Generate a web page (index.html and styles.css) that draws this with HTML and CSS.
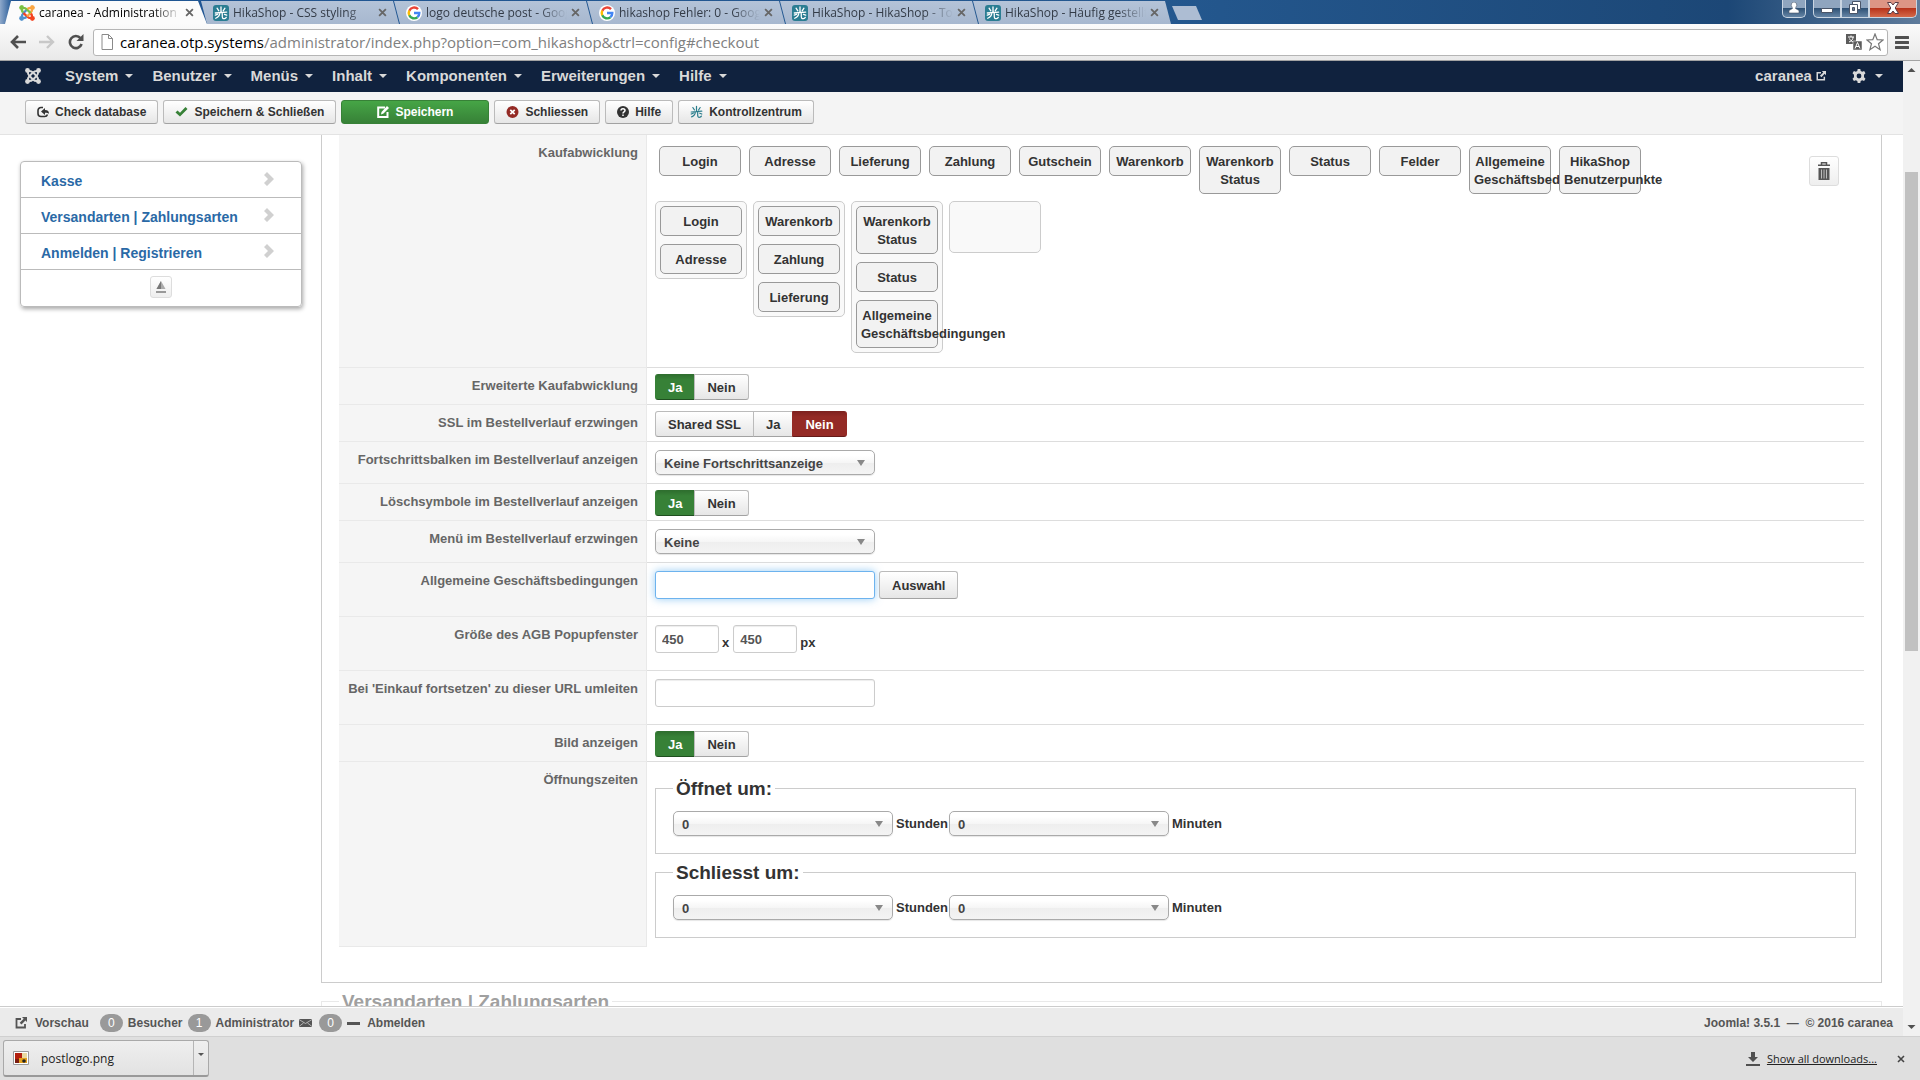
FILE: index.html
```html
<!DOCTYPE html>
<html lang="de">

<head>
    <meta charset="UTF-8">
    <meta name="viewport" content="width=device-width, initial-scale=1.0">
    <title>caranea - Administration</title>
    <link rel="stylesheet" href="styles.css">
</head>

<body>
    <!-- shared icons -->
    <svg class="sprite" width="0" height="0">
        <symbol id="hika" viewBox="0 0 16 16">
            <g fill="none" stroke="currentColor" stroke-width="1.500" stroke-linecap="round">
                <path d="M8 1v6M3.500 2.500l2 3M12.500 2.500l-2 3M1.500 8l13-1M6.500 8c0 3-2 5-4.500 6M9.500 8c0 2-.5 5 .5 6s3 .5 4-1M4 9.500l-2.500 1M12 9.500l2.500 1" />
            </g>
        </symbol>
        <symbol id="google" viewBox="0 0 16 16">
            <circle cx="8" cy="8" r="8" fill="#fff" />
            <g fill="none" stroke-width="2.400">
                <path d="M12 4.200A5.300 5.300 0 0 0 3.300 5.800" stroke="#ea4335" />
                <path d="M3.300 5.600a5.300 5.300 0 0 0 0 4.800" stroke="#fbbc05" />
                <path d="M3.300 10.200a5.300 5.300 0 0 0 8.200 2" stroke="#34a853" />
                <path d="M11.400 12.200A5.300 5.300 0 0 0 13.300 8H8" stroke="#4285f4" />
            </g>
        </symbol>
        <symbol id="joomla" viewBox="0 0 16 16">
            <g fill="none" stroke="currentColor" stroke-width="2">
                <path d="M3 3Q2.500 6 4.500 8L8 11.500Q10 13.500 13 13" />
                <path d="M13 3Q10 2.500 8 4.500L4.500 8Q2.500 10 3 13" />
                <path d="M13 13Q13.500 10 11.500 8L8 4.500Q6 2.500 3 3" />
                <path d="M3 13Q6 13.500 8 11.500L11.500 8Q13.500 6 13 3" />
            </g>
            <g fill="currentColor">
                <circle cx="2.500" cy="2.500" r="2.400" /><circle cx="13.500" cy="2.500" r="2.400" />
                <circle cx="2.500" cy="13.500" r="2.400" /><circle cx="13.500" cy="13.500" r="2.400" />
            </g>
        </symbol>
        <symbol id="close" viewBox="0 0 8 8">
            <path d="M1 1l6 6M7 1L1 7" stroke="currentColor" stroke-width="1.600" />
        </symbol>
        <symbol id="out" viewBox="0 0 12 12">
            <path d="M6 2H1.500v8.500H10V7" fill="none" stroke="currentColor" stroke-width="1.800" />
            <path d="M7 0h5v5l-1.600-1.600L6.500 7.500 4.700 5.700l4-4z" fill="currentColor" />
        </symbol>
        <symbol id="chevron" viewBox="0 0 10 14">
            <path d="M3 0l7 7-7 7-3-3 4-4-4-4z" fill="currentColor" />
        </symbol>
    </svg>

    <header class="tabstrip">
        <div class="tab active">
            <svg class="favicon" viewBox="0 0 16 16">
                <g fill="none" stroke-width="2.400">
                    <path d="M3 13Q2.500 10 4.500 8L8 4.500" stroke="#5091cd" />
                    <path d="M13 13Q10 13.500 8 11.500L4.500 8" stroke="#f44321" />
                    <path d="M13 3Q13.500 6 11.500 8L8 11.500" stroke="#f9a541" />
                    <path d="M3 3Q6 2.500 8 4.500L11.500 8" stroke="#7ac143" />
                    <path d="M3 3Q2.500 5.500 4 7.500" stroke="#7ac143" />
                    <path d="M13 3Q10.500 2.500 8.500 4" stroke="#f9a541" />
                    <path d="M13 13Q13.500 10.500 12 8.500" stroke="#f44321" />
                    <path d="M3 13Q5.500 13.500 7.500 12" stroke="#5091cd" />
                </g>
                <circle cx="2.500" cy="2.500" r="2.400" fill="#7ac143" /><circle cx="13.500" cy="2.500" r="2.400" fill="#f9a541" />
                <circle cx="2.500" cy="13.500" r="2.400" fill="#5091cd" /><circle cx="13.500" cy="13.500" r="2.400" fill="#f44321" />
            </svg>
            <span class="tab-title">caranea - Administration -</span>
            <svg class="tab-close"><use href="#close" /></svg>
        </div>
        <div class="tab">
            <svg class="favicon hika-icon"><use href="#hika" /></svg>
            <span class="tab-title">HikaShop - CSS styling</span>
            <svg class="tab-close"><use href="#close" /></svg>
        </div>
        <div class="tab">
            <svg class="favicon"><use href="#google" /></svg>
            <span class="tab-title">logo deutsche post - Goog</span>
            <svg class="tab-close"><use href="#close" /></svg>
        </div>
        <div class="tab">
            <svg class="favicon"><use href="#google" /></svg>
            <span class="tab-title">hikashop Fehler: 0 - Googl</span>
            <svg class="tab-close"><use href="#close" /></svg>
        </div>
        <div class="tab">
            <svg class="favicon hika-icon"><use href="#hika" /></svg>
            <span class="tab-title">HikaShop - HikaShop - To</span>
            <svg class="tab-close"><use href="#close" /></svg>
        </div>
        <div class="tab">
            <svg class="favicon hika-icon"><use href="#hika" /></svg>
            <span class="tab-title">HikaShop - Häufig gestellt</span>
            <svg class="tab-close"><use href="#close" /></svg>
        </div>
        <button class="new-tab" aria-label="New tab"></button>
        <div class="window-buttons">
            <button class="win user" aria-label="User">
                <svg width="12" height="12" viewBox="0 0 12 12"><path d="M6 0a3 3 0 0 1 2 5l-.5 1.500L11 8.500V11H1V8.500l3.500-2L4 5a3 3 0 0 1 2-5z" fill="#fff" stroke="#4a5568" stroke-width=".6" /></svg>
            </button>
            <button class="win min" aria-label="Minimize">
                <svg width="14" height="12" viewBox="0 0 14 12"><path d="M1.500 6.500h11v4h-11z" fill="#fff" stroke="#4a5568" /></svg>
            </button>
            <button class="win max" aria-label="Restore">
                <svg width="14" height="13" viewBox="0 0 14 13"><path d="M4.500.5h8v8h-8z" fill="#fff" stroke="#4a5568" /><path d="M1.500 3.500h8v9h-8z" fill="#fff" stroke="#4a5568" /><path d="M4.500 6.500h2v3h-2z" fill="#6d7f94" stroke="#4a5568" /></svg>
            </button>
            <button class="win quit" aria-label="Close">
                <svg width="14" height="12" viewBox="0 0 14 12"><path d="M1.500.5h3.500l2 2.500 2-2.500h3.500L9.200 6l3.300 5.500H9L7 9l-2 2.500H1.500L4.800 6z" fill="#fff" stroke="#5a3c46" /></svg>
            </button>
        </div>
    </header>

    <div class="addressbar">
        <button class="nav-btn" aria-label="Back"><svg width="16" height="14" viewBox="0 0 16 14"><path d="M8 1L2 7l6 6M2.500 7H16" fill="none" stroke="#505050" stroke-width="2.600" /></svg></button>
        <button class="nav-btn" aria-label="Forward"><svg width="16" height="14" viewBox="0 0 16 14"><path d="M8 1l6 6-6 6M13.500 7H0" fill="none" stroke="#c8c8c8" stroke-width="2.400" /></svg></button>
        <button class="nav-btn" aria-label="Reload"><svg width="16" height="16" viewBox="0 0 16 16"><path d="M12.500 4.200A6 6 0 1 0 13.600 10" fill="none" stroke="#505050" stroke-width="2.600" /><path d="M15.500 0v7h-7z" fill="#505050" /></svg></button>
        <div class="omnibox">
            <svg width="12" height="16" viewBox="0 0 12 16"><path d="M1 .5h6.500l4 4v11H1z" fill="#fff" stroke="#8a8a8a" /><path d="M7.500.5v4h4" fill="none" stroke="#8a8a8a" /></svg>
            <div class="url"><b>caranea.otp.systems</b>/administrator/index.php?option=com_hikashop&amp;ctrl=config#checkout</div>
            <svg width="16" height="16" viewBox="0 0 16 16"><path d="M0 0h10v10H0z" fill="#5c5c5c" /><path d="M2 3h6M5 1.500V3M3 8c3-1 4-3 4-5M3.500 4.500C4 6 5.500 7.500 7.500 8" fill="none" stroke="#fff" /><path d="M7 7h9v9H7z" fill="#5c5c5c" stroke="#fff" stroke-width=".5" /><path d="M9 14.500l2.500-6 2.500 6M10 12.500h3" fill="none" stroke="#fff" /></svg>
            <svg width="18" height="18" viewBox="0 0 18 18"><path d="M9 1l2.200 5.600 5.800.4-4.500 3.700 1.600 6L9 13.300l-5.100 3.400 1.600-6L1 7l5.800-.4z" fill="#fff" stroke="#777" stroke-width="1.200" /></svg>
        </div>
        <button class="nav-btn" aria-label="Menu"><svg width="14" height="13" viewBox="0 0 14 13"><path d="M1 1.500h12M1 6.500h12M1 11.500h12" stroke="#505050" stroke-width="3" stroke-linecap="round" /></svg></button>
    </div>

    <div class="viewport">
        <div class="page">
            <nav class="navbar">
                <a class="brand" href="#" aria-label="Joomla"><svg width="16" height="16"><use href="#joomla" /></svg></a>
                <a class="menu-item" href="#">System</a>
                <a class="menu-item" href="#">Benutzer</a>
                <a class="menu-item" href="#">Menüs</a>
                <a class="menu-item" href="#">Inhalt</a>
                <a class="menu-item" href="#">Komponenten</a>
                <a class="menu-item" href="#">Erweiterungen</a>
                <a class="menu-item" href="#">Hilfe</a>
                <a class="site-link" href="#">caranea <svg width="10" height="10"><use href="#out" /></svg></a>
                <a class="menu-item settings" href="#" aria-label="Settings"><svg width="14" height="14" viewBox="0 0 14 14"><path fill-rule="evenodd" d="M5.700 0h2.600l.4 2 1.500.8 1.900-.8 1.400 2.300L12 5.800v2.400l1.500 1.500-1.400 2.300-1.900-.8-1.500.8-.4 2H5.700l-.4-2-1.500-.8-1.900.8L.5 9.700 2 8.200V5.800L.5 4.300 1.900 2l1.900.8L5.300 2zM7 4.600a2.400 2.400 0 1 0 0 4.800 2.400 2.400 0 0 0 0-4.800z" fill="currentColor" /></svg></a>
            </nav>

            <div class="toolbar">
                <button class="btn btn-small">
                    <svg width="12" height="12" viewBox="0 0 12 12"><path d="M6 1.500H4a3 3 0 0 0-3 3v3a3 3 0 0 0 3 3h3.500a3 3 0 0 0 3-2" fill="none" stroke="#333" stroke-width="1.600" /><path d="M4 5.500L8 2v2c3 0 4 1.500 4 4-1-1-2-1.200-4-1.200V9z" fill="#333" /></svg>Check database</button>
                <button class="btn btn-small">
                    <svg width="13" height="12" viewBox="0 0 12 12"><path d="M0 6.500l2-2 2.500 2.300L10 1l2 2-7.500 7.500z" fill="#378137" /></svg>Speichern &amp; Schließen</button>
                <button class="btn btn-small btn-save">
                    <svg width="12" height="12" viewBox="0 0 12 12"><path d="M8 1.500H1.200v9.500h9.300V6" fill="none" stroke="#fff" stroke-width="2" /><path d="M10 0l2 2-5.500 5.500L4 8.500 4.500 6z" fill="#fff" /></svg>Speichern</button>
                <button class="btn btn-small">
                    <svg width="13" height="12" viewBox="0 0 12 12"><circle cx="6" cy="6" r="6" fill="#942a25" /><path d="M3.800 3.800l4.400 4.400M8.200 3.800L3.800 8.200" stroke="#fff" stroke-width="1.700" /></svg>Schliessen</button>
                <button class="btn btn-small">
                    <svg width="12" height="12" viewBox="0 0 12 12"><circle cx="6" cy="6" r="6" fill="#333" /><path d="M4 4.500C4 2 8 2 8 4.500 8 6 6 5.800 6 7.500M6 8.500V10" fill="none" stroke="#fff" stroke-width="1.500" /></svg>Hilfe</button>
                <button class="btn btn-small">
                    <svg class="teal" width="13" height="14"><use href="#hika" /></svg>Kontrollzentrum</button>
            </div>

            <div class="content">
                <aside class="sidebar">
                    <ul class="sidemenu">
                        <li><a href="#">Kasse</a><svg width="10" height="14"><use href="#chevron" /></svg></li>
                        <li><a href="#">Versandarten | Zahlungsarten</a><svg width="10" height="14"><use href="#chevron" /></svg></li>
                        <li><a href="#">Anmelden | Registrieren</a><svg width="10" height="14"><use href="#chevron" /></svg></li>
                        <li class="to-top"><button class="icon-btn" aria-label="Nach oben"><svg width="10" height="12" viewBox="0 0 10 12"><path d="M5 0l4.500 8h-9z" fill="#aaa" /><path d="M5 0v8H.5z" fill="#777" /><path d="M0 10h10v2H0z" fill="#999" /></svg></button></li>
                    </ul>
                </aside>

                <main class="main">
                    <section class="panel">
                        <div class="row">
                            <div class="key">Kaufabwicklung</div>
                            <div class="value workflow">
                                <div class="step-source">
                                    <div class="step">Login</div>
                                    <div class="step">Adresse</div>
                                    <div class="step">Lieferung</div>
                                    <div class="step">Zahlung</div>
                                    <div class="step">Gutschein</div>
                                    <div class="step">Warenkorb</div>
                                    <div class="step">Warenkorb Status</div>
                                    <div class="step">Status</div>
                                    <div class="step">Felder</div>
                                    <div class="step">Allgemeine Geschäftsbedingungen</div>
                                    <div class="step">HikaShop Benutzerpunkte</div>
                                    <button class="icon-btn trash" aria-label="Papierkorb"><svg width="12" height="18" viewBox="0 0 12 18"><path d="M3.500 3V.8h5V3" fill="none" stroke="#555" stroke-width="1.500" /><path d="M0 2.500h12V4H0zM.5 6h11v12H.5z" fill="#555" /><path d="M3.500 7.500v9M6 7.500v9M8.500 7.500v9" stroke="#bbb" /></svg></button>
                                </div>
                                <div class="step-target">
                                    <div class="step-list">
                                        <div class="step">Login</div>
                                        <div class="step">Adresse</div>
                                    </div>
                                    <div class="step-list">
                                        <div class="step">Warenkorb</div>
                                        <div class="step">Zahlung</div>
                                        <div class="step">Lieferung</div>
                                    </div>
                                    <div class="step-list">
                                        <div class="step">Warenkorb Status</div>
                                        <div class="step">Status</div>
                                        <div class="step">Allgemeine Geschäftsbedingungen</div>
                                    </div>
                                    <div class="step-list"></div>
                                </div>
                            </div>
                        </div>
                        <div class="row">
                            <div class="key">Erweiterte Kaufabwicklung</div>
                            <div class="value toggle">
                                <input type="radio" name="workflow" id="workflow1" checked><label class="btn yes" for="workflow1">Ja</label>
                                <input type="radio" name="workflow" id="workflow0"><label class="btn no" for="workflow0">Nein</label>
                            </div>
                        </div>
                        <div class="row">
                            <div class="key">SSL im Bestellverlauf erzwingen</div>
                            <div class="value toggle">
                                <input type="radio" name="ssl" id="ssl2"><label class="btn yes" for="ssl2">Shared SSL</label>
                                <input type="radio" name="ssl" id="ssl1"><label class="btn yes" for="ssl1">Ja</label>
                                <input type="radio" name="ssl" id="ssl0" checked><label class="btn no" for="ssl0">Nein</label>
                            </div>
                        </div>
                        <div class="row">
                            <label class="key" for="bar">Fortschrittsbalken im Bestellverlauf anzeigen</label>
                            <div class="value">
                                <div class="chosen"><select id="bar"><option>Keine Fortschrittsanzeige</option></select></div>
                            </div>
                        </div>
                        <div class="row">
                            <div class="key">Löschsymbole im Bestellverlauf anzeigen</div>
                            <div class="value toggle">
                                <input type="radio" name="del" id="del1" checked><label class="btn yes" for="del1">Ja</label>
                                <input type="radio" name="del" id="del0"><label class="btn no" for="del0">Nein</label>
                            </div>
                        </div>
                        <div class="row">
                            <label class="key" for="itemid">Menü im Bestellverlauf erzwingen</label>
                            <div class="value">
                                <div class="chosen"><select id="itemid"><option>Keine</option></select></div>
                            </div>
                        </div>
                        <div class="row">
                            <label class="key" for="terms">Allgemeine Geschäftsbedingungen</label>
                            <div class="value">
                                <input class="text focused" type="text" id="terms">
                                <button class="btn choose">Auswahl</button>
                            </div>
                        </div>
                        <div class="row">
                            <label class="key" for="popupx">Größe des AGB Popupfenster</label>
                            <div class="value">
                                <input class="text short" type="text" id="popupx" value="450">
                                <span class="unit">x</span>
                                <input class="text short" type="text" aria-label="Höhe" value="450">
                                <span class="unit">px</span>
                            </div>
                        </div>
                        <div class="row">
                            <label class="key" for="continue">Bei 'Einkauf fortsetzen' zu dieser URL umleiten</label>
                            <div class="value">
                                <input class="text" type="text" id="continue">
                            </div>
                        </div>
                        <div class="row">
                            <div class="key">Bild anzeigen</div>
                            <div class="value toggle">
                                <input type="radio" name="img" id="img1" checked><label class="btn yes" for="img1">Ja</label>
                                <input type="radio" name="img" id="img0"><label class="btn no" for="img0">Nein</label>
                            </div>
                        </div>
                        <div class="row">
                            <div class="key">Öffnungszeiten</div>
                            <div class="value hours">
                                <fieldset>
                                    <legend>Öffnet um:</legend>
                                    <div class="time">
                                        <div class="chosen"><select id="oh"><option>0</option></select></div><label for="oh">Stunden</label>
                                        <div class="chosen"><select id="om"><option>0</option></select></div><label for="om">Minuten</label>
                                    </div>
                                </fieldset>
                                <fieldset>
                                    <legend>Schliesst um:</legend>
                                    <div class="time">
                                        <div class="chosen"><select id="ch"><option>0</option></select></div><label for="ch">Stunden</label>
                                        <div class="chosen"><select id="cm"><option>0</option></select></div><label for="cm">Minuten</label>
                                    </div>
                                </fieldset>
                            </div>
                        </div>
                    </section>
                    <fieldset class="next">
                        <legend>Versandarten | Zahlungsarten</legend>
                    </fieldset>
                </main>
            </div>

            <footer class="status">
                <a class="preview" href="#"><svg width="12" height="12"><use href="#out" /></svg>Vorschau</a>
                <span class="badge">0</span><span>Besucher</span>
                <span class="badge">1</span><span>Administrator</span>
                <svg class="mail" width="13" height="8" viewBox="0 0 13 8"><path d="M0 0h13v8H0z" fill="#555" /><path d="M0 .5l6.500 4 6.500-4M0 7.500L4.500 4M13 7.500L8.500 4" fill="none" stroke="#ccc" stroke-width=".8" /></svg>
                <span class="badge">0</span>
                <svg width="13" height="3"><path d="M0 0h13v3H0z" fill="#555" /></svg>
                <a class="logout" href="#">Abmelden</a>
                <span class="version">Joomla! 3.5.1 &nbsp;—&nbsp; © 2016 caranea</span>
            </footer>
        </div>

        <div class="scrollbar">
            <svg width="17" height="17" viewBox="0 0 17 17"><path d="M4.500 11h8l-4-4z" fill="#505050" /></svg>
            <div class="track">
                <div class="thumb"></div>
            </div>
            <svg width="17" height="17" viewBox="0 0 17 17"><path d="M4.500 6h8l-4 4z" fill="#505050" /></svg>
        </div>
    </div>

    <div class="downloads">
        <div class="file">
            <button class="file-open"><svg width="16" height="14" viewBox="0 0 16 14"><path d="M.5.5h15v13H.5z" fill="#fff" stroke="#999" /><path d="M2 2h7v6H2z" fill="#b3200f" /><path d="M9 2h5v5H9z" fill="#e9d9a0" /><path d="M6 7h8v5H6z" fill="#e5a11c" /><path d="M2 8h4v4H2z" fill="#7a1d12" /><circle cx="11" cy="10" r="1.800" fill="#222" /></svg>postlogo.png</button>
            <button class="file-menu" aria-label="Optionen"><span class="caret"></span></button>
        </div>
        <a class="all-downloads" href="#"><svg width="14" height="14" viewBox="0 0 14 14"><path d="M5 0h4v5h3L7 10 2 5h3zM0 12h14v2H0z" fill="#505050" /></svg><span>Show all downloads...</span></a>
        <button class="nav-btn close-bar" aria-label="Schließen"><svg width="8" height="8"><use href="#close" /></svg></button>
    </div>
</body>

</html>
```

FILE: styles.css
```css
* {
    box-sizing: border-box;
}

body {
    display: flex;
    flex-direction: column;
    height: 100vh;
    margin: 0;
    overflow: hidden;
    font-family: "Liberation Sans", Arial, sans-serif;
    font-size: 13px;
    font-weight: bold;
    line-height: 18px;
    color: #333;
    background-color: #fff;
}

a {
    color: inherit;
    text-decoration: none;
}

button, input, select {
    margin: 0;
    font: inherit;
    color: inherit;
}

svg {
    flex: none;
}

.sprite {
    position: absolute;
}

/* browser tabs */
.tabstrip {
    display: flex;
    height: 24px;
    padding: 1px 3px 0 5px;
    background: linear-gradient(90deg, #8fa9cb 0, #1f5593 12px, #24588f 60%, #1c4776 90%, #5f7c9c 100%);
    font: 12px "Open Sans", sans-serif;
}

.tab {
    display: flex;
    align-items: center;
    width: 200px;
    margin-right: -7px;
    padding: 0 13px 0 13px;
    color: #333b47;
    background: linear-gradient(#b4c3d8, #a7b8cf);
    clip-path: polygon(1px 0, 193px 0, 199px 100%, 7px 100%);
}

.tab.active {
    width: 202px;
    color: #000;
    background: #fbfbfb;
    clip-path: polygon(6px 0, 193px 0, 202px 100%, 0 100%);
    padding: 0 13px 0 14px;
}

.favicon {
    width: 16px;
    height: 16px;
    margin-right: 4px;
    border-radius: 3px;
}

.hika-icon {
    padding: 1px;
    color: #fff;
    background-color: #2a7d92;
}

.tab-title {
    flex: 1;
    overflow: hidden;
    white-space: nowrap;
    margin-right: 4px;
    -webkit-mask-image: linear-gradient(90deg, #000 80%, transparent);
    mask-image: linear-gradient(90deg, #000 80%, transparent);
}

.tab-close {
    width: 9px;
    height: 9px;
    color: #666;
}

.new-tab {
    width: 30px;
    height: 14px;
    margin: 5px 0 0 7px;
    padding: 0;
    border: none;
    background-color: #adbdd3;
    clip-path: polygon(0 0, 24px 0, 30px 100%, 6px 100%);
}

.window-buttons {
    display: flex;
    height: 18px;
    margin: -1px 0 0 auto;
}

.win {
    display: flex;
    justify-content: center;
    align-items: center;
    width: 28px;
    padding: 0 0 2px;
    border: 1px solid #c9d5e2;
    border-top: none;
    background: linear-gradient(#8fa5bf 45%, #2f5276 50%, #6585a6);
}

.win.user {
    width: 24px;
    margin-right: 7px;
    border-radius: 0 0 5px 5px;
}

.win.min {
    border-radius: 0 0 0 5px;
}

.win.quit {
    width: 48px;
    border-radius: 0 0 5px 0;
    background: linear-gradient(#dd9585 45%, #b8341c 50%, #d4694a);
}

/* address bar */
.addressbar {
    display: flex;
    align-items: center;
    height: 37px;
    padding: 0 8px;
    border-bottom: 1px solid #a3a3a3;
    background: linear-gradient(#fbfbfb, #e9e9e9);
}

.nav-btn {
    display: flex;
    justify-content: center;
    width: 29px;
    padding: 0;
    border: none;
    background: none;
}

.addressbar .nav-btn:first-child {
    width: 20px;
    margin-right: 4px;
}

.addressbar .nav-btn:last-child {
    width: 24px;
    margin-right: -2px;
    margin-left: 2px;
}

.omnibox {
    flex: 1;
    display: flex;
    align-items: center;
    height: 27px;
    margin-left: 3px;
    padding: 0 3px 0 7px;
    gap: 4px;
    border: 1px solid #b5b5b5;
    border-radius: 3px;
    background-color: #fff;
}

.url {
    flex: 1;
    padding-left: 3px;
    font: 15px "Open Sans", sans-serif;
    line-height: 22px;
    color: #808080;
}

.url b {
    font-weight: normal;
    color: #000;
}

.viewport {
    flex: 1;
    display: flex;
    min-height: 0;
}

.page {
    flex: 1;
    display: flex;
    flex-direction: column;
    min-width: 0;
}

/* joomla navbar */
.navbar {
    display: flex;
    align-items: center;
    height: 31px;
    padding: 0 20px 2px 25px;
    gap: 19px;
    font-size: 15px;
    color: #d9d9d9;
    background-color: #10223e;
}

.brand {
    display: flex;
    margin-right: 5px;
}

.menu-item {
    display: flex;
    align-items: center;
    gap: 7px;
}

.menu-item::after, .caret {
    content: "";
    border: 4px solid transparent;
    border-top-color: currentColor;
    border-bottom: none;
}

.site-link {
    margin-left: auto;
}

.settings {
    margin-left: 7px;
    gap: 9px;
}

/* buttons */
.toolbar {
    display: flex;
    gap: 5px;
    height: 43px;
    padding: 8px 25px;
    border-bottom: 1px solid #e3e3e3;
    background-color: #f4f4f4;
}

.btn {
    display: flex;
    justify-content: center;
    align-items: center;
    padding: 2px 12px 0;
    border: 1px solid #bbb;
    border-bottom-color: #a2a2a2;
    border-radius: 3px;
    color: #333;
    background: linear-gradient(#fff, #e6e6e6);
}

.btn-small {
    gap: 6px;
    height: 24px;
    padding: 0 11px;
    font-size: 12px;
}

.btn-save {
    width: 148px;
    color: #fff;
    border-color: #378137;
    background: linear-gradient(#46a546, #378137);
}

.teal {
    color: #2a7d8c;
}

.icon-btn {
    display: flex;
    justify-content: center;
    align-items: center;
    width: 22px;
    height: 22px;
    padding: 0;
    border: 1px solid #ddd;
    border-radius: 3px;
    background: linear-gradient(#fff, #eee);
}

/* content */
.content {
    flex: 1;
    display: flex;
    gap: 19px;
    min-height: 0;
    padding: 0 21px 0 20px;
    overflow: hidden;
}

.sidebar {
    width: 282px;
    padding-top: 26px;
}

.sidemenu {
    margin: 0;
    padding: 0;
    list-style: none;
    border: 1px solid #bbb;
    border-radius: 4px;
    box-shadow: 1px 2px 4px rgba(0, 0, 0, .35);
}

.sidemenu li {
    display: flex;
    justify-content: space-between;
    height: 36px;
    padding: 10px 27px 0 20px;
    border-bottom: 1px solid #bbb;
    font-size: 14px;
    color: #d0d0d0;
}

.sidemenu a {
    color: #2a69a6;
}

.sidemenu .to-top {
    justify-content: center;
    padding: 6px 0 0;
    border-bottom: none;
}

.main {
    flex: 1;
    min-width: 0;
}

.panel {
    padding: 0 17px 35px;
    border: 1px solid #ccc;
    border-top: none;
}

.row {
    display: flex;
}

.key {
    width: 308px;
    padding: 9px 8px 0;
    border-right: 1px solid #e9e9e9;
    border-bottom: 1px solid #e9e9e9;
    text-align: right;
    color: #666;
    background-color: #f5f5f5;
}

.value {
    flex: 1;
    display: flex;
    align-items: flex-start;
    min-width: 0;
    padding: 8px;
    border-bottom: 1px solid #ddd;
}

.row:last-child .value {
    border-bottom: none;
    padding-bottom: 9px;
}

/* checkout steps */
.value.workflow {
    display: block;
    padding: 11px 8px 14px;
}

.step-source {
    display: flex;
    align-items: flex-start;
    gap: 8px;
    padding-left: 4px;
    margin-bottom: 7px;
}

.step {
    position: relative;
    width: 82px;
    padding: 6px 4px 4px;
    border: 1px solid #999;
    border-radius: 5px;
    text-align: center;
    background-color: #f2f2f2;
}

.step-target {
    display: flex;
    align-items: flex-start;
    gap: 6px;
}

.step-list {
    display: flex;
    flex-direction: column;
    gap: 8px;
    width: 92px;
    min-height: 52px;
    padding: 4px;
    border: 1px solid #ccc;
    border-radius: 5px;
    background-color: #f9f9f9;
}

.trash {
    width: 30px;
    height: 30px;
    margin: 10px 17px 0 auto;
}

/* yes / no switches */
.value.toggle {
    padding: 6px 8px 4px;
}

.toggle input {
    position: absolute;
    opacity: 0;
}

.toggle .btn {
    height: 26px;
    margin-left: -1px;
    border-radius: 0;
}

.toggle .btn:first-of-type {
    margin-left: 0;
    border-radius: 3px 0 0 3px;
}

.toggle .btn:last-of-type {
    border-radius: 0 3px 3px 0;
}

.toggle input:checked + .yes {
    color: #fff;
    border-color: #2f6f2f #378137 #1f4f1f;
    background: linear-gradient(#2f702f, #378137 5px);
}

.toggle input:checked + .no {
    color: #fff;
    border-color: #7c211e #942a25 #641a18;
    background: linear-gradient(#81221f, #942a25 5px);
}

/* fields */
.chosen {
    position: relative;
    width: 220px;
}

.chosen select {
    display: block;
    width: 100%;
    height: 25px;
    padding: 2px 8px 0;
    border: 1px solid #aaa;
    border-radius: 5px;
    color: #444;
    background: linear-gradient(#fff 20%, #f6f6f6 50%, #eee 52%, #f4f4f4);
    box-shadow: 0 1px 1px rgba(0, 0, 0, .1);
    appearance: none;
}

.chosen::after {
    content: "";
    position: absolute;
    top: 10px;
    right: 10px;
    border: 4px solid transparent;
    border-top: 6px solid #888;
    border-bottom: none;
}

.text {
    width: 220px;
    height: 28px;
    margin-bottom: 9px;
    padding: 4px 6px;
    border: 1px solid #ccc;
    border-radius: 3px;
    color: #555;
    background-color: #fff;
    box-shadow: inset 0 1px 1px rgba(0, 0, 0, .075);
}

.text.short {
    width: 64px;
}

.text.focused {
    border-color: #6db3ee;
    box-shadow: 0 0 8px rgba(82, 168, 236, .6);
}

.choose {
    height: 28px;
    margin-left: 4px;
}

.unit {
    padding: 9px 4px 0 3px;
}

fieldset {
    margin: 0;
    padding: 4px 17px 17px;
    border: 1px solid #ccc;
}

legend {
    padding: 0 3px;
    font-size: 19px;
    line-height: 37px;
}

.value.hours {
    display: block;
}

.time {
    display: flex;
    align-items: center;
}

.time label {
    margin: 0 1px 0 3px;
}

.next {
    border-color: #e9e9e9;
    color: #a0a0a0;
}

/* status bar */
.status {
    display: flex;
    align-items: center;
    height: 30px;
    padding: 3px 10px 0 15px;
    gap: 5px;
    border-top: 1px solid #ccc;
    box-shadow: inset 0 1px 0 #fff;
    font-size: 12px;
    color: #555;
    background-color: #ebebeb;
}

.preview {
    display: flex;
    align-items: center;
    gap: 8px;
    margin-right: 6px;
}

.badge {
    width: 23px;
    border-radius: 9px;
    text-align: center;
    font-weight: normal;
    color: #fff;
    background-color: #999;
}

.mail {
    margin-right: 2px;
}

.logout {
    margin-left: 2px;
}

.version {
    margin-left: auto;
}

/* scrollbar */
.scrollbar {
    display: flex;
    flex-direction: column;
    width: 17px;
    background-color: #f1f1f1;
}

.track {
    flex: 1;
    display: flex;
    flex-direction: column;
    padding: 94px 2px 0;
}

.thumb {
    flex: 13;
    background-color: #c1c1c1;
}

.track::after {
    content: "";
    flex: 10;
}

/* download shelf */
.downloads {
    display: flex;
    align-items: center;
    height: 44px;
    padding: 0 8px 0 3px;
    border-top: 1px solid #d0d0d0;
    font: 12px "Open Sans", sans-serif;
    color: #222;
    background-color: #dfdfdf;
}

.file {
    display: flex;
    width: 206px;
    height: 37px;
    border: 1px solid #a9a9a9;
    border-bottom: 2px solid #999;
    border-radius: 3px;
    background: linear-gradient(#efefef, #e2e2e2);
}

.file button {
    display: flex;
    align-items: center;
    padding: 0;
    border: none;
    background: none;
}

.file .file-open {
    flex: 1;
    gap: 12px;
    padding-left: 9px;
    border-right: 1px solid #b5b5b5;
}

.file .file-menu {
    justify-content: center;
    align-items: flex-start;
    width: 14px;
    padding-top: 12px;
}

.caret {
    color: #555;
    border-width: 3px;
}

.all-downloads {
    display: flex;
    align-items: center;
    gap: 7px;
    margin-left: auto;
    font-size: 11px;
}

.all-downloads span {
    text-decoration: underline;
}

.close-bar {
    width: 8px;
    margin: 0 7px 0 20px;
    color: #444;
}
```
